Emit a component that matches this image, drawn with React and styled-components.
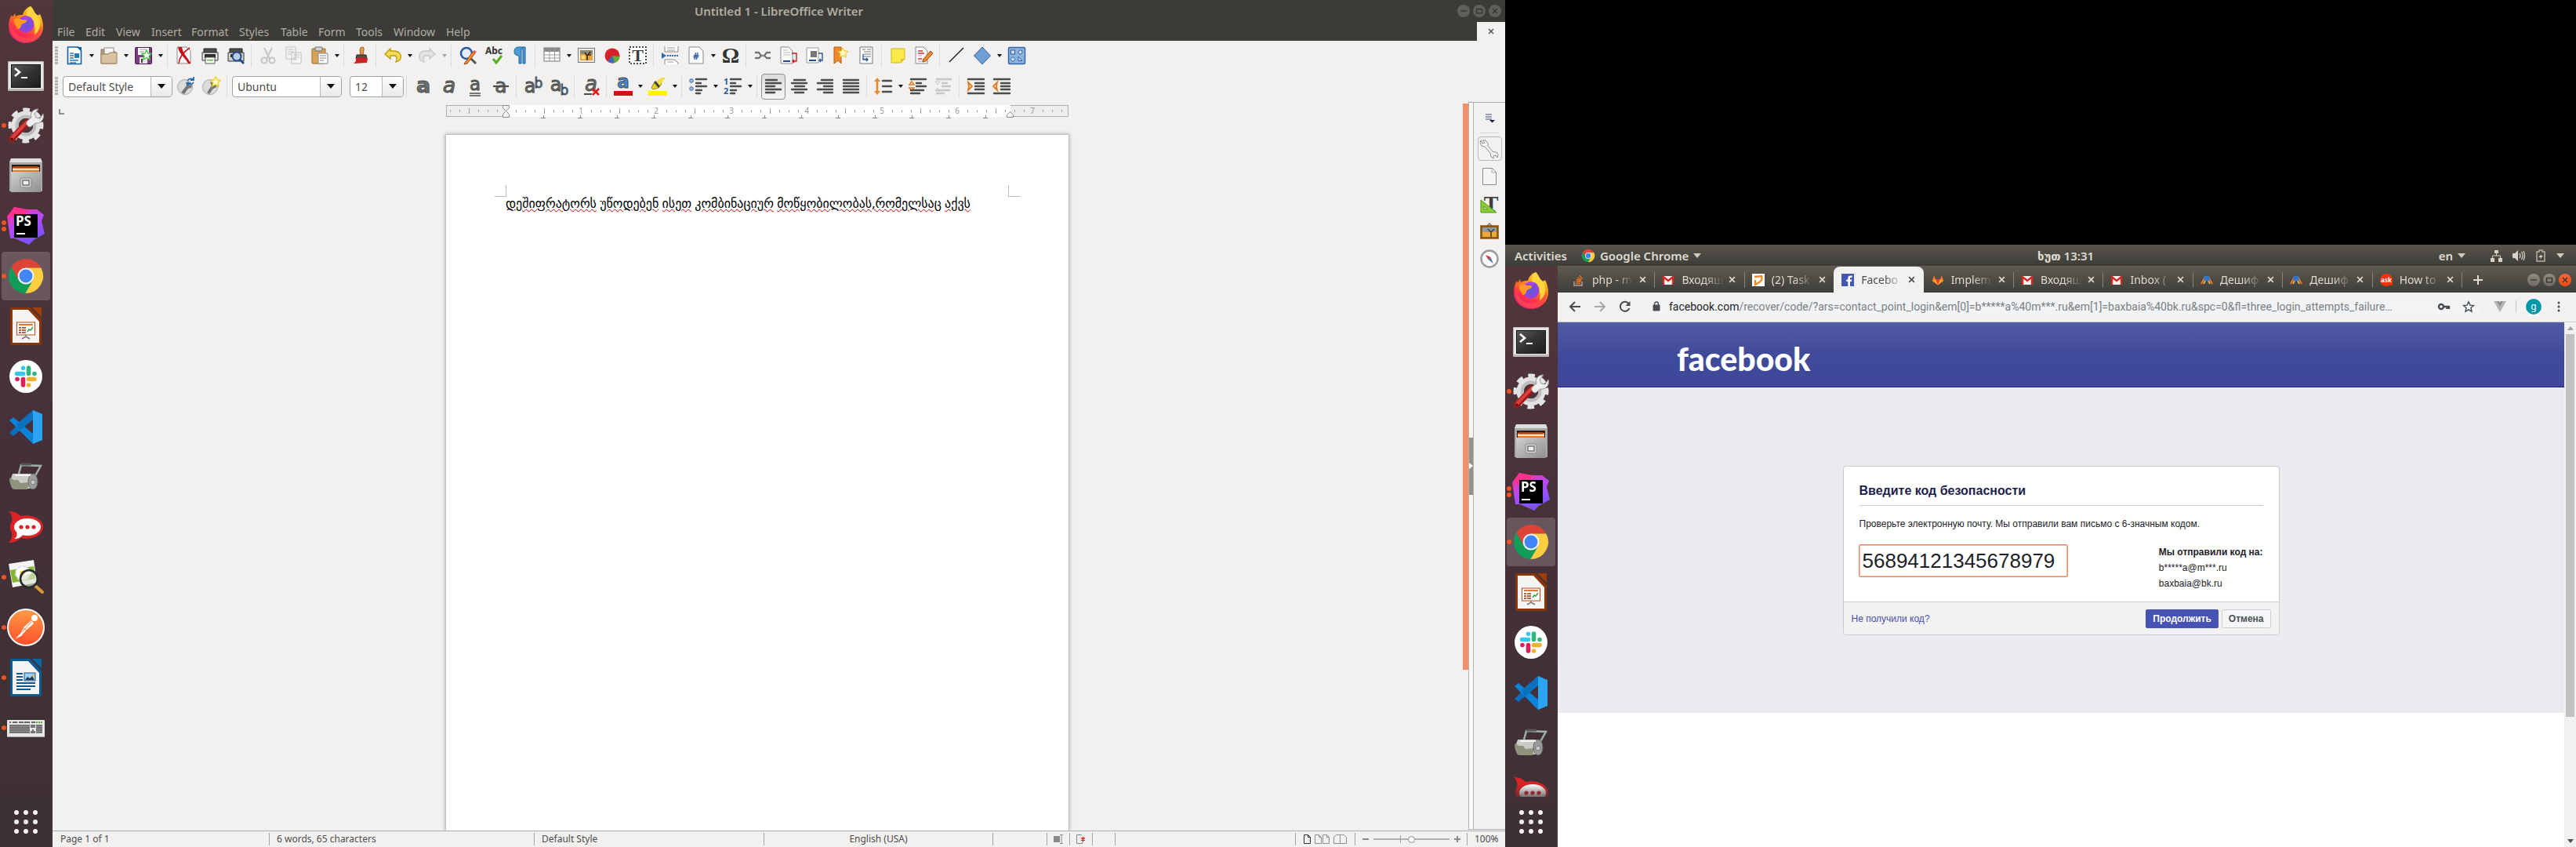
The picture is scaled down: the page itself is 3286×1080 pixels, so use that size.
import React from "react";
import styled, { createGlobalStyle, css } from "styled-components";

const UI = `"Noto Sans", "DejaVu Sans", sans-serif`;
const ARIAL = `"Liberation Sans", Arial, sans-serif`;

const Global = createGlobalStyle`
  * { box-sizing: border-box; }
  body { margin: 0; background: #000; font-family: ${UI}; font-size: 14px; }
  button, input, select { font: inherit; margin: 0; }
  button { border: 0; background: none; padding: 0; color: inherit; }
  p, h1, h2 { margin: 0; }
  svg { display: block; flex: none; overflow: visible; }
`;

const Desktop = styled.div`
  display: grid;
  grid-template-columns: 1920fr 1366fr;
  height: 100vh;
  overflow: hidden;
`;

/* ---------- Dock ---------- */

const DockBar = styled.nav`
  flex: none;
  width: 67px;
  display: flex;
  flex-direction: column;
  background: linear-gradient(#51363a, #45303a 55%, #3d3134);
`;
const DockList = styled.div`
  flex: 1;
  min-height: 0;
  overflow: hidden;
  ${(p) => p.$fade && css`mask-image: linear-gradient(#000 calc(100% - 16px), rgba(0, 0, 0, 0.3));`}
`;
const DockItem = styled.button`
  width: 65px;
  height: 64px;
  display: grid;
  grid-template-columns: 9px 48px;
  align-items: center;
`;
const DockSlot = styled.div`
  display: flex;
  padding-left: ${(p) => (p.$active ? "2px" : "0")};
  > button {
    width: ${(p) => (p.$active ? "62px" : "65px")};
    margin: 1px 0;
    height: 62px;
    grid-template-columns: ${(p) => (p.$active ? "7px 48px" : "9px 48px")};
    border-radius: 4px;
    background: ${(p) => (p.$active ? "rgba(255,255,255,0.18)" : "none")};
  }
`;
const Dots = styled.span`
  display: flex;
  flex-direction: column;
  gap: 2px;
  padding-left: ${(p) => (p.$active ? "0" : "2px")};
`;
const Dot = styled.i`
  width: 6px;
  height: 6px;
  border-radius: 50%;
  background: #e95420;
`;

const Firefox = () => (
  <svg width="48" height="48" viewBox="0 0 48 48">
    <defs>
      <linearGradient id="ffa" x1="0.8" y1="0" x2="0.3" y2="1">
        <stop offset="0" stopColor="#fff44f" />
        <stop offset="0.35" stopColor="#ff980e" />
        <stop offset="0.7" stopColor="#ff3647" />
        <stop offset="1" stopColor="#e31587" />
      </linearGradient>
      <radialGradient id="ffb">
        <stop offset="0" stopColor="#5b5bd6" />
        <stop offset="1" stopColor="#9a3fe0" />
      </radialGradient>
    </defs>
    <path d="M30 0c5 5 4 8 8 11 1 1 3 0 4-1 3 6 4 12 4 16 0 12-10 21-22 21S2 38 2 26c0-7 2-12 4-15l1 3 3-5 1 4c3-2 6-2 9-2 1-5 5-9 10-11z" fill="url(#ffa)" />
    <path d="M30 0c5 5 4 8 8 11 7 7 5 20-3 25 1-6 1-10-2-15-2-4-7-5-8-10 0-5 2-8 5-11z" fill="#ffd43c" />
    <path d="M5 23c2 16 20 21 31 13 4-3 6-7 7-12 3 13-6 22-19 22C11 46 3 36 5 23z" fill="#ff4a4a" opacity=".75" />
    <circle cx="24" cy="23" r="10.5" fill="url(#ffb)" />
    <path d="M18 14c4-3 12-2 14 2-3-1-6 0-6 2z" fill="#a347e8" />
    <path d="M9 17c4-3 8-1 10 0 4 0 6 0 6 2s-6 3-7 5c0 3-2 5-5 5-1-5-5-6-4-12z" fill="#ff9a1f" />
  </svg>
);
const Terminal = () => (
  <svg width="48" height="48" viewBox="0 0 48 48">
    <defs>
      <linearGradient id="trm" x1="0" y1="0" x2="1" y2="1">
        <stop offset="0" stopColor="#5a5a58" />
        <stop offset="0.5" stopColor="#333" />
        <stop offset="1" stopColor="#1e1e1e" />
      </linearGradient>
    </defs>
    <rect x="1" y="6" width="46" height="38" rx="1" fill="#b9b9b7" />
    <rect x="2" y="7" width="44" height="34" fill="#e6e6e4" />
    <rect x="5" y="10" width="38" height="30" fill="#111" />
    <rect x="6" y="11" width="36" height="28" fill="url(#trm)" />
    <path d="M10 15l6 5-6 5" stroke="#fff" strokeWidth="2.6" fill="none" />
    <path d="M18 27h8" stroke="#fff" strokeWidth="2" />
  </svg>
);
const Gear = () => (
  <svg width="48" height="48" viewBox="0 0 48 48">
    <circle cx="24" cy="24" r="19" fill="none" stroke="#e4e4e4" strokeWidth="7" strokeDasharray="8 6.92" transform="rotate(-12 24 24)" />
    <circle cx="24" cy="24" r="14" fill="none" stroke="#e2e2e2" strokeWidth="9" />
    <circle cx="24" cy="24" r="11.5" fill="none" stroke="#bdbdbd" strokeWidth="4" />
    <path d="M6 41L26 20" stroke="#a31515" strokeWidth="8" strokeLinecap="round" />
    <path d="M6 40L25 20" stroke="#d94040" strokeWidth="4" strokeLinecap="round" />
    <circle cx="6" cy="41" r="1.6" fill="#3b1515" />
    <path d="M26 18l5-4c-2-6 2-11 9-11l-5 6 2 5 5 1 4-6c2 7-3 13-10 12l-5 4c-3 3-9-3-5-7z" fill="#eee" stroke="#999" />
  </svg>
);
const Files = () => (
  <svg width="48" height="48" viewBox="0 0 48 48">
    <defs>
      <linearGradient id="fil" x1="0" y1="0" x2="1" y2="1">
        <stop offset="0" stopColor="#cfcfcf" />
        <stop offset="1" stopColor="#8f8f8f" />
      </linearGradient>
    </defs>
    <path d="M5 2h38l2 6v36H3V8z" fill="#a8a8a6" />
    <path d="M5 2h38l2 5H3z" fill="#dededc" />
    <rect x="6" y="10" width="36" height="12" fill="#2a1a12" />
    <path d="M7 13h34v9H7z" fill="#e8772a" />
    <path d="M7 15h34v2H7z" fill="#f8e0c0" />
    <path d="M8 12h31v2H8z" fill="#a4451a" />
    <rect x="5" y="19" width="38" height="26" fill="url(#fil)" />
    <rect x="17" y="27" width="14" height="12" rx="2" fill="#d0d0ce" stroke="#8a8a8a" />
    <rect x="20" y="30" width="8" height="6" fill="#efefef" stroke="#444" />
  </svg>
);
const PhpStorm = () => (
  <svg width="48" height="48" viewBox="0 0 48 48">
    <defs>
      <linearGradient id="psg" x1="0.2" y1="0" x2="0.7" y2="1">
        <stop offset="0" stopColor="#ff2d90" />
        <stop offset="0.45" stopColor="#b74af7" />
        <stop offset="1" stopColor="#6b57ff" />
      </linearGradient>
    </defs>
    <path d="M9 0l17 3 12 0 9 7-3 8 4 16-14 8-6 6-18-8H4L0 12z" fill="url(#psg)" />
    <path d="M9 0l17 4-5 12L2 12z" fill="#ff318c" />
    <rect x="9" y="9" width="30" height="30" fill="#000" />
    <text x="11" y="24" fontFamily={UI} fontSize="17" fontWeight="700" fill="#fff">PS</text>
    <path d="M12 34h11" stroke="#fff" strokeWidth="2" />
  </svg>
);
const Chrome = ({ size = 48 }) => (
  <svg width={size} height={size} viewBox="0 0 48 48">
    <path d="M43.3 13.5A22 22 0 0 0 5.25 12.54L14.9 29.25 24 13.5z" fill="#db4437" />
    <path d="M5.25 12.54A22 22 0 0 0 23.4 46L33.1 29.25H14.9z" fill="#0f9d58" />
    <path d="M23.4 46A22 22 0 0 0 43.3 13.5H24l9.1 15.75z" fill="#ffcd40" />
    <circle cx="24" cy="24" r="10.5" fill="#f1f1f1" />
    <circle cx="24" cy="24" r="8.4" fill="#4285f4" />
  </svg>
);
const Impress = () => (
  <svg width="48" height="48" viewBox="0 0 48 48">
    <path d="M6 0h23l15 15v31a2 2 0 0 1-2 2H6a2 2 0 0 1-2-2V2a2 2 0 0 1 2-2z" fill="#8a3505" />
    <path d="M32 0h12v12z" fill="#a33e03" />
    <path d="M7 3h20l14 15v27H7z" fill="#f4f4f4" />
    <rect x="12.5" y="19" width="23" height="16" fill="#fff" stroke="#b54a18" />
    <path d="M15 22h18" stroke="#e07a3c" strokeWidth="2" />
    <path d="M15 26h3m-3 3h3m-3 3h3m1-6h5m-5 3h5m-5 3h5" stroke="#8a3505" strokeWidth="1.6" />
    <path d="M26 31l2-3 2 1 3-4" stroke="#2f9e3a" strokeWidth="1.4" fill="none" />
    <path d="M24 35v2m-5 3l5-3 5 3" stroke="#777" strokeWidth="1.5" fill="none" />
  </svg>
);
const Slack = () => (
  <svg width="48" height="48" viewBox="0 0 48 48">
    <circle cx="24" cy="24" r="21" fill="#fff" />
    <g strokeWidth="5.6" strokeLinecap="round">
      <path d="M20.5 20.500h-8M20.500 13.200v0" stroke="#36c5f0" />
      <path d="M27.5 20.500v-7.500M35 20.500h0" stroke="#2eb67d" />
      <path d="M27.5 27.500h7.500M27.500 35v0" stroke="#ecb22e" />
      <path d="M20.5 27.500v7.500M13 27.500h0" stroke="#e01e5a" />
    </g>
  </svg>
);
const VsCode = () => (
  <svg width="48" height="48" viewBox="0 0 48 48">
    <path d="M33 3l12 5v33l-12 5z" fill="#2ba4f2" />
    <path d="M33 3v12L8 36l-5-4z" fill="#0b6fc0" />
    <path d="M33 46V33L8 12l-5 4z" fill="#0a84d8" />
    <path d="M33 3v12L16 29l-4-8z" fill="#0c70bd" />
  </svg>
);
const Roller = () => (
  <svg width="48" height="48" viewBox="0 0 48 48">
    <path d="M15 20l3-11 25 1-9 16" fill="none" stroke="#9fb0a8" strokeWidth="2.5" />
    <path d="M18 8h13" stroke="#555" strokeWidth="3" />
    <path d="M7 20h26v19H7q-5-8 0-19z" fill="#c9cbc5" />
    <path d="M3 25l6 3h5l3 4 11-1-2 9H8q-5-5-5-15z" fill="#8d937c" />
    <ellipse cx="33" cy="30" rx="6" ry="10" fill="#9b9d9b" stroke="#666" />
    <circle cx="33" cy="31" r="3" fill="#c9c9c9" stroke="#777" />
    <path d="M10 22h20" stroke="#f2f2f2" strokeWidth="2" />
  </svg>
);
const Rocket = () => (
  <svg width="48" height="48" viewBox="0 0 48 48">
    <path d="M2 4c6 0 12 2 15 6 15-3 29 4 29 14S33 41 17 38c-3 4-9 6-15 6 4-5 5-9 4-13-3-5-3-9 0-14 1-5 0-9-4-13z" fill="#db2323" />
    <ellipse cx="26" cy="24" rx="17" ry="11" fill="#fff" />
    <path d="M9 39c4-2 4-5 3-9l8 4c-2 3-6 5-11 5z" fill="#fff" />
    <circle cx="18" cy="24" r="2.6" fill="#db2323" />
    <circle cx="26" cy="24" r="2.6" fill="#db2323" />
    <circle cx="34" cy="24" r="2.6" fill="#db2323" />
  </svg>
);
const Photo = () => (
  <svg width="48" height="48" viewBox="0 0 48 48">
    <path d="M2 7l32-5 4 29-31 6z" fill="#f4f4f2" />
    <path d="M4 15l30-5 2 16-29 5z" fill="#86b530" />
    <circle cx="20" cy="19" r="9" fill="#fff" strokeDasharray="4 2" stroke="#dde" strokeWidth="2" />
    <circle cx="20" cy="19" r="3.5" fill="#f0c020" />
    <path d="M36 35l9 8" stroke="#d99a3a" strokeWidth="4" strokeLinecap="round" />
    <circle cx="28" cy="26" r="11" fill="rgba(215,225,205,.65)" stroke="#262a2a" strokeWidth="2.6" />
    <path d="M22 22c1-3 5-5 9-3" stroke="#fff" strokeWidth="2" fill="none" />
  </svg>
);
const Postman = () => (
  <svg width="48" height="48" viewBox="0 0 48 48">
    <defs>
      <linearGradient id="pst" x1="0" y1="0" x2="0" y2="1">
        <stop offset="0" stopColor="#ff9a45" />
        <stop offset="1" stopColor="#ff4f2b" />
      </linearGradient>
    </defs>
    <circle cx="24" cy="24" r="23" fill="url(#pst)" stroke="#fff" strokeWidth="2" />
    <circle cx="35" cy="12" r="4" fill="#fff" />
    <path d="M31 15l3 4-10 9-6 7-8 4 7-7 4-8z" fill="#fff" />
    <path d="M20 25l6 3m-10 2l-5 8M31 17l-12 13" stroke="#ff7a3a" strokeWidth="1" fill="none" />
  </svg>
);
const WriterApp = () => (
  <svg width="48" height="48" viewBox="0 0 48 48">
    <path d="M6 0h23l15 15v31a2 2 0 0 1-2 2H6a2 2 0 0 1-2-2V2a2 2 0 0 1 2-2z" fill="#0b5a94" />
    <path d="M32 0h12v12z" fill="#0a67a8" />
    <path d="M7 3h20l14 15v27H7z" fill="#f4f4f4" />
    <path d="M12 19h8m-8 4h8m-8 4h8m-8 4h24m-24 4h24m-24 4h18" stroke="#0b5a94" strokeWidth="2" />
    <rect x="22" y="18" width="14" height="10" fill="#9fd0f5" stroke="#0b5a94" />
    <path d="M23 27l3-4 3 2 3-3 3 5z" fill="#1c3a4e" />
    <circle cx="33.5" cy="21" r="1.5" fill="#f5b83a" />
  </svg>
);
const Keyboard = () => (
  <svg width="48" height="48" viewBox="0 0 48 48">
    <rect x="0" y="14" width="48" height="22" rx="1" fill="#e8e8e6" />
    <path d="M0 35h48v1H0z" fill="#a5a5a3" />
    <path d="M3 17h2m2 0h6m2 0h6m1 0h7m2 0h5" stroke="#666" strokeWidth="2" />
    <path d="M37 17h8" stroke="#5aa53a" strokeWidth="2" strokeDasharray="2 1" />
    <path d="M3 20h26v11H3zM37 20h8v11h-8zM30 20h6v4h-6zM32 26h2v2h2v3h-6v-3h2z" fill="#747474" />
    <path d="M3 22.500h26M3 25.500h26M3 28.500h26M37 22.500h8M37 25.500h8M37 28.500h8" stroke="#9b9b9b" strokeWidth=".6" />
  </svg>
);
const AppsGrid = () => (
  <svg width="48" height="48" viewBox="0 0 48 48">
    {[12, 24, 36].map((x) => [12, 24, 36].map((y) => <circle key={x + "-" + y} cx={x} cy={y} r="3" fill="#f2f2f2" />))}
  </svg>
);

const APPS = [
  ["Firefox", Firefox, 0], ["Terminal", Terminal, 0], ["Tweaks", Gear, 1], ["Files", Files, 0],
  ["PhpStorm", PhpStorm, 2], ["Google Chrome", Chrome, 1, true], ["LibreOffice Impress", Impress, 0],
  ["Slack", Slack, 0], ["Visual Studio Code", VsCode, 0], ["Roller", Roller, 0], ["Rocket.Chat", Rocket, 0],
  ["Image Viewer", Photo, 1], ["Postman", Postman, 1], ["LibreOffice Writer", WriterApp, 1], ["Keyboard", Keyboard, 1],
];

const Dock = ({ fade }) => (
  <DockBar aria-label="Dock">
    <DockList $fade={fade}>
      {APPS.map(([name, Icon, n, active]) => (
        <DockSlot key={name} $active={active}>
          <DockItem aria-label={name}>
            <Dots $active={active}>{Array.from({ length: n }, (_, i) => <Dot key={i} />)}</Dots>
            <Icon />
          </DockItem>
        </DockSlot>
      ))}
    </DockList>
    <DockItem aria-label="Show applications"><Dots /><AppsGrid /></DockItem>
  </DockBar>
);

/* ---------- Writer window ---------- */

const Screen = styled.section`
  display: flex;
  min-width: 0;
  min-height: 0;
  flex: 1;
`;
const WriterWindow = styled.div`
  flex: 1;
  min-width: 0;
  display: flex;
  flex-direction: column;
  background: #f2f1f0;
  color: #4c4c4c;
`;
const TitleBar = styled.header`
  height: 28px;
  display: grid;
  grid-template-columns: 1fr auto 1fr;
  align-items: center;
  background: #3c3b37;
  color: #b0aea4;
  h1 { font-size: 15px; font-weight: 600; line-height: 20px; }
`;
const WinControls = styled.div`
  grid-column: 3;
  justify-self: end;
  display: flex;
  gap: 4px;
  padding-right: 5px;
`;
const WinButton = styled.button`
  width: 16px;
  height: 16px;
  border-radius: 50%;
  background: ${(p) => (p.$hot ? "linear-gradient(#f4683a, #ee4b16)" : p.$lit ? "linear-gradient(#8f8d84, #6d6b63)" : "#615f59")};
  color: #35342f;
`;
const MenuRow = styled.div`
  display: flex;
  height: 24px;
  background: #3c3b37;
`;
const Menu = styled.div`
  flex: 1;
  display: flex;
  align-items: center;
  padding: 2px 0 0 6px;
`;
const MenuButton = styled.button`
  width: ${(p) => p.$w}px;
  color: #b0aea4;
  text-align: left;
  line-height: 20px;
`;
const CloseDoc = styled.button`
  width: 36px;
  background: #f2f1f0;
  display: grid;
  place-items: center;
`;
const Toolbar = styled.div`
  height: ${(p) => p.$h}px;
  padding-left: 3px;
  display: flex;
  align-items: center;
`;
const Grip = styled.i`
  width: 4px;
  height: 24px;
  background: repeating-linear-gradient(#b4b4b2 0 3px, transparent 3px 4px);
  margin-right: ${(p) => p.$gap}px;
`;
const Tool = styled.button`
  width: 33px;
  height: 33px;
  display: grid;
  place-items: center;
  opacity: ${(p) => (p.$off ? 0.35 : 1)};
  ${(p) => p.$on && css`
    width: 31px;
    margin: 0 1px;
    border: 1px solid #8f8f8d;
    border-radius: 4px;
    background: linear-gradient(#dcdcda, #f4f4f3);
  `}
`;
const Drop = styled.button`
  width: 11px;
  height: 33px;
  display: grid;
  place-items: center;
  opacity: ${(p) => (p.$off ? 0.35 : 1)};
  &::after { content: ""; border: 3px solid transparent; border-top: 4px solid #111; border-bottom: 0; }
`;
const Sep = styled.i`
  width: 1px;
  height: 29px;
  margin: 0 4px 0 3px;
  background: #dcdbd9;
`;
const Combo = styled.label`
  width: ${(p) => p.$w}px;
  height: 27px;
  margin: 0 ${(p) => p.$after || 0}px 0 ${(p) => p.$before || 0}px;
  display: flex;
  border: 1px solid #a3a19d;
  border-radius: 4px;
  background: #fff;
  overflow: hidden;
  select {
    flex: 1;
    min-width: 0;
    appearance: none;
    border: 0;
    padding: 0 0 0 6px;
    background: none;
    color: #4c4c4c;
    outline: 0;
  }
`;
const ComboArrow = styled.span`
  width: 27px;
  border-left: 1px solid #b9b7b3;
  background: linear-gradient(#fdfdfd, #e9e9e7);
  display: grid;
  place-items: center;
  &::after { content: ""; border: 5px solid transparent; border-top: 6px solid #111; border-bottom: 0; }
`;

const Svg = ({ children, s = 24 }) => <svg width={s} height={s} viewBox="0 0 24 24" fill="none">{children}</svg>;
const Sheet = ({ x = 4, y = 1, w = 16, h = 21, stroke = "#8a8a88" }) => (
  <path d={`M${x} ${y}h${w - 5}l5 5v${h - 5}h-${w}z`} fill="#fbfbfb" stroke={stroke} />
);
const Lines = ({ rows, color = "#4a4d4a", sw = 2.4 }) => (
  <path d={rows.map(([x, y, w]) => `M${x} ${y}h${w}`).join("")} stroke={color} strokeWidth={sw} strokeLinecap="round" />
);
const Letter = ({ children, italic, x = 12, y = 19, size = 24, fill = "#6a706c", anchor = "middle", weight = 700 }) => (
  <text x={x} y={y} fontFamily={`"DejaVu Sans", sans-serif`} fontSize={size} fontWeight={weight} fontStyle={italic ? "italic" : "normal"} textAnchor={anchor} fill={fill} stroke="#3d423f" strokeWidth=".8">{children}</text>
);

const I = {
  newDoc: <Svg><path d="M3.5 1h13l4 4v17.500h-17z" fill="#fff" stroke="#0f609b" strokeWidth="1.6" /><path d="M15 1h6v6z" fill="#0f609b" /><path d="M6 9h5m-5 3h5m-5 3h5m-5 3h11m-11 3h8" stroke="#2a7ab8" strokeWidth="1.4" /><rect x="12" y="9" width="6" height="6" fill="#2a7ab8" /></Svg>,
  open: <Svg><path d="M2 4h8l2 3h8v15H2z" fill="#b59a78" stroke="#8c7250" /><path d="M6 2h12v8H6z" fill="#f7f7f5" stroke="#888" /><path d="M2 10l9 0 2-2h9v14H2z" fill="#d9c2a0" stroke="#99805c" /></Svg>,
  save: <Svg><rect x="1.5" y="1.5" width="21" height="21" rx="1" fill="#7a3d80" stroke="#4b1c50" /><rect x="5" y="2" width="14" height="9" fill="#fff" /><path d="M7 4h9m-9 3h6" stroke="#999" /><rect x="7" y="14" width="10" height="8" fill="#e4e4e4" /><path d="M9 16h2v5H9z" fill="#444" /><path d="M16 5l2 4 4 .4-3 3 1 4.400-4-2.300-4 2.300 1-4.400-3-3 4-.4z" fill="#fff" stroke="#43c443" strokeWidth="1.4" /></Svg>,
  pdf: <Svg><Sheet x={3} w={17} /><path d="M4 1h5c1 7 6 12 11 20v1h-3C14 15 5 10 4 1z" fill="#c5141c" /><path d="M19 2C13 6 6 12 5 22" stroke="#c5141c" strokeWidth="1.6" /></Svg>,
  print: <Svg><path d="M4 3h16v7H4z" fill="#4d4f4d" stroke="#222" /><path d="M2 8h20v10H2z" fill="#e5e5e3" stroke="#333" /><path d="M5 10h14v5H5z" fill="#2d2d2d" /><path d="M6 14h12v8H6z" fill="#fff" stroke="#555" /><path d="M8 18c3-2 5 2 8-1" stroke="#5cb53a" strokeWidth="1.6" /></Svg>,
  preview: <Svg><path d="M4 3h16v7H4z" fill="#4d4f4d" stroke="#222" /><path d="M2 8h20v11H2z" fill="#d0d0ce" stroke="#333" /><path d="M5 10h14v4H5z" fill="#2d2d2d" /><circle cx="13" cy="13" r="5.5" fill="#b8cdea" stroke="#204a87" strokeWidth="2" /><path d="M17 17l5 5" stroke="#204a87" strokeWidth="2.6" /></Svg>,
  cut: <Svg><path d="M7 2l7 14M17 2l-7 14" stroke="#777" strokeWidth="2" /><circle cx="7" cy="18" r="3.5" stroke="#777" strokeWidth="2" /><circle cx="17" cy="18" r="3.5" stroke="#777" strokeWidth="2" /></Svg>,
  copy: <Svg><path d="M2 1h12v15H2zM9 8h12v14H9z" fill="#fff" stroke="#666" /><path d="M4 4h8M4 7h8M4 10h4m3 1h8m-8 3h8m-8 3h5" stroke="#666" /></Svg>,
  paste: <Svg><rect x="2" y="3" width="17" height="19" rx="1" fill="#d9a254" stroke="#9a6a26" /><rect x="6" y="1" width="9" height="5" rx="1" fill="#d5d5d3" stroke="#666" /><path d="M10 9h12v13H10z" fill="#fff" stroke="#888" /><path d="M12 12h8m-8 3h8m-8 3h5" stroke="#888" /></Svg>,
  brush: <Svg><path d="M14 1q3 0 2 4l-1 6h-3l-1-6q0-4 3-4z" fill="#e39a4a" stroke="#a35f1c" /><path d="M7 11h12l1 5H6z" fill="#5a4a42" stroke="#2d2420" /><path d="M6 15h15l-1 6-17 1 3-3z" fill="#d21f26" /></Svg>,
  undo: <Svg><path d="M9 3L2 10l7 6v-4h5q5 0 2 8 8-2 6-9-2-5-9-5H9z" fill="#f4dc52" stroke="#b99a10" strokeWidth="1.3" /></Svg>,
  redo: <Svg><path d="M15 3l7 7-7 6v-4h-5q-5 0-2 8-8-2-6-9 2-5 9-5h4z" fill="#ccc" stroke="#777" strokeWidth="1.3" /></Svg>,
  find: <Svg><circle cx="10" cy="9" r="7" fill="#e6eef8" stroke="#2a5ca5" strokeWidth="2.6" /><path d="M15 15l7 7" stroke="#555" strokeWidth="3" /><path d="M8 21l10-14 3 2-10 13-4 1z" fill="#ee8a3a" stroke="#9a4a12" /><path d="M18 7l2-2 3 2-2 2z" fill="#e05a5a" /></Svg>,
  abc: <Svg><text x="12" y="10" fontFamily={UI} fontSize="12" fontWeight="700" textAnchor="middle" fill="#333">Abc</text><path d="M11 16l4 5 7-9" stroke="#57b022" strokeWidth="3" /></Svg>,
  pilcrow: <Svg><path d="M11 1h8v21h-3V3h-2v19h-3V12q-6 0-6-5.500T11 1z" fill="#4e9bd4" stroke="#1a639c" /></Svg>,
  table: <Svg><rect x="2" y="2" width="20" height="17" fill="#fff" stroke="#777" /><path d="M2 2h20v5H2z" fill="#8a8a88" /><path d="M2 11h20M2 15h20M9 2v17M15.500 2v17" stroke="#999" /></Svg>,
  image: <Svg><rect x="1.5" y="2.5" width="21" height="18" fill="#e9e9e7" stroke="#777" /><rect x="4" y="5" width="16" height="13" fill="#e8a33a" /><path d="M4 5h16v5H4z" fill="#8f8a72" /><path d="M13 18v-6l-3-4m3 4l4-5m-3 4l4 0" stroke="#33261a" strokeWidth="1.5" /><circle cx="8" cy="14" r="2.5" fill="#ffe36e" /></Svg>,
  chart: <Svg><circle cx="12" cy="12" r="9.5" fill="#d8202a" /><path d="M12 12l9.500 1A9.500 9.500 0 0 1 14 21.300z" fill="#6aa832" /><path d="M12 12l3 9A9.500 9.500 0 0 1 6 19z" fill="#3a6cb5" /></Svg>,
  text: <Svg><rect x="1" y="1" width="21" height="21" stroke="#111" strokeWidth="1.5" strokeDasharray="2 2" fill="#fff" /><text x="11.5" y="19" fontFamily={`"Liberation Serif", serif`} fontSize="22" fontWeight="700" textAnchor="middle" fill="#3a3d3b">T</text></Svg>,
  pageBreak: <Svg><path d="M5 0v7h17V0M5 23v-6h12l5 4v2" fill="#fff" stroke="#888" /><path d="M8 2h10M8 5h10M8 20h8" stroke="#999" /><path d="M1 8l6 4-6 4z" fill="#2a6cb0" /><path d="M8 12h15" stroke="#2a6cb0" strokeWidth="2" strokeDasharray="2 1" /></Svg>,
  field: <Svg><Sheet x={3} w={18} /><text x="12" y="17" fontFamily={UI} fontSize="12" fontWeight="700" textAnchor="middle" fill="#2a5a9c">#</text></Svg>,
  omega: <Svg><text x="12" y="21" fontFamily={`"Liberation Serif", serif`} fontSize="28" fontWeight="700" textAnchor="middle" fill="#2f3331">Ω</text></Svg>,
  link: <Svg><path d="M2 8h5l3 4-3 3H2m20-7h-5l-3 4 3 3h5M8 12h8" stroke="#8a8d8a" strokeWidth="2.3" /><path d="M2 8h5l3 4-3 3H2m20-7h-5l-3 4 3 3h5" stroke="#4b4e4b" strokeWidth=".8" /></Svg>,
  footnote: <Svg><Sheet x={2} w={15} /><path d="M5 5h6m-6 3h9m-9 3h9" stroke="#bbb" /><path d="M5 19h9" stroke="#204a87" strokeWidth="2" /><path d="M16 9h6v10h-5m2-2l-2 2 2 2" stroke="#cc1a1a" strokeWidth="1.4" /></Svg>,
  endnote: <Svg><path d="M2 2h15v19H2z" fill="#fff" stroke="#999" /><path d="M7 6h8v8H7z" fill="#777" /><path d="M5 18h9" stroke="#204a87" strokeWidth="2" /><path d="M17 9h5v9h-4m2-2l-2 2 2 2" stroke="#2a5a9c" strokeWidth="1.4" /></Svg>,
  bookmark: <Svg><path d="M4 1h9v21l-4-4-5 4z" fill="#f0892c" stroke="#b85a10" /><path d="M15 2l2 4 5 .4-3.600 3 1 4.600-4.400-2.500-4 2.500 1-4.600L9 6.400l4-.4z" fill="#fff7b8" stroke="#e6c619" /></Svg>,
  crossRef: <Svg><path d="M4 1h16v21H4z" fill="#fff" stroke="#777" /><path d="M7 4h4m2 0h5M9 7h9M9 10h9m-9 3h9m-9 3h5" stroke="#777" /><path d="M8 10v7h6m-2-2l2 2-2 2" stroke="#2a5a9c" strokeWidth="1.4" /></Svg>,
  note: <Svg><path d="M3 3h17v13l-5 5H3z" fill="#fbea49" stroke="#cdb70f" /><path d="M20 16h-5v5z" fill="#d8c22a" /></Svg>,
  track: <Svg><Sheet x={1} w={15} /><path d="M4 6h6M4 9h8M4 16h5" stroke="#c33" strokeWidth="1.4" /><path d="M4 12h5m-5 7h8" stroke="#aaa" /><path d="M10 20l1-4 9-10 3 3-9 10z" fill="#ee8a3a" stroke="#9a4a12" /></Svg>,
  line: <Svg><path d="M3 20L21 2" stroke="#111" strokeWidth="1.3" /></Svg>,
  diamond: <Svg><path d="M12 1l10.500 11L12 23 1.500 12z" fill="#6f9fd4" stroke="#3465a4" /></Svg>,
  shapes: <Svg><rect x="1.5" y="1.5" width="21" height="21" rx="1.5" fill="#8bb3de" stroke="#3465a4" strokeWidth="1.5" /><rect x="4.5" y="5" width="5" height="5" fill="#d4e3f4" stroke="#2a5a9c" /><circle cx="16.5" cy="7.5" r="2.5" fill="#d4e3f4" stroke="#2a5a9c" /><path d="M7 13.500l3 3-3 3-3-3zM14 13.500v5h5z" fill="#d4e3f4" stroke="#2a5a9c" /></Svg>,
  upd: <Svg><circle cx="11" cy="13" r="9.5" fill="#dcdcda" stroke="#a8a8a6" /><path d="M6 20l7-9-1-4 4-1-1 3 2 2 3-1-1 4-4 1-5 7z" fill="#777" /><path d="M14 5q3-4 7-2m1 4q-3 4-7 2M22 0v4h-4M14 11V8h4" stroke="#2a6cb0" strokeWidth="1.8" /></Svg>,
  newStyle: <Svg><circle cx="10" cy="13" r="9.5" fill="#dcdcda" stroke="#a8a8a6" /><path d="M6 20l6-9-2-4 3-1 0 3 3 2 3-1-2 4-3 1-5 7z" fill="#777" /><path d="M17 0l2 4 4 .4-3 3 1 4.400-4-2.300-4 2.300 1-4.400-3-3 4-.4z" fill="#fffbd8" stroke="#efd41c" strokeWidth="1.4" /></Svg>,
  bold: <Svg><Letter size={27} y={20}>a</Letter></Svg>,
  italic: <Svg><Letter italic size={27} y={20} weight={400}>a</Letter></Svg>,
  under: <Svg><Letter size={23} y={17} weight={400}>a</Letter><path d="M5 21h14M5 24h14" stroke="#4a4d4a" strokeWidth="1.4" /></Svg>,
  strike: <Svg><Letter size={25} y={20} weight={400}>a</Letter><path d="M2 12h20" stroke="#4a4d4a" strokeWidth="2.2" /></Svg>,
  sup: <Svg><Letter size={24} y={20} x={8} weight={400}>a</Letter><Letter size={17} y={14} x={19} fill="#4a86cf" weight={400}>b</Letter></Svg>,
  sub: <Svg><Letter size={24} y={18} x={8} weight={400}>a</Letter><Letter size={17} y={23} x={19} fill="#4a86cf" weight={400}>b</Letter></Svg>,
  clear: <Svg><Letter italic size={26} y={18} weight={400}>a</Letter><path d="M3 22h10" stroke="#4a4d4a" strokeWidth="2" /><path d="M14 15l8 8m0-8l-8 8" stroke="#e01818" strokeWidth="2.6" /></Svg>,
  color: <Svg><Letter size={23} y={14} fill="#4a86cf">a</Letter><rect x="0" y="18" width="24" height="6" fill="#cf1118" /></Svg>,
  mark: <Svg><path d="M4 14l3-6 6-3 4 4-4 5-7 2z" fill="#e8d020" stroke="#9a8a10" /><path d="M10 6l7-5h5l-6 8-3 2z" fill="#f0e040" /><path d="M8 6l6 7" stroke="#444" strokeWidth="3" /><rect x="0" y="18" width="24" height="6" fill="#fff200" /></Svg>,
  bullets: <Svg><circle cx="3" cy="5" r="2.3" fill="#9fc2e8" stroke="#3465a4" /><circle cx="3" cy="15" r="2.3" fill="#9fc2e8" stroke="#3465a4" /><Lines rows={[[9, 3, 13], [9, 8, 6], [9, 12, 13], [9, 17, 7], [9, 21, 5]]} /></Svg>,
  numbers: <Svg><text x="0" y="10" fontFamily={UI} fontSize="11" fontWeight="700" fill="#2a5a9c">1</text><text x="0" y="22" fontFamily={UI} fontSize="11" fontWeight="700" fill="#2a5a9c">2</text><Lines rows={[[9, 3, 13], [9, 8, 6], [9, 12, 13], [9, 17, 7], [9, 21, 5]]} /></Svg>,
  left: <Svg><Lines rows={[[2, 4, 14], [2, 8, 19], [2, 12, 11], [2, 16, 19], [2, 20, 11]]} /></Svg>,
  center: <Svg><Lines rows={[[5, 4, 14], [2, 8, 19], [6, 12, 12], [2, 16, 19], [6, 20, 11]]} /></Svg>,
  right: <Svg><Lines rows={[[7, 4, 14], [2, 8, 19], [10, 12, 11], [2, 16, 19], [10, 20, 11]]} /></Svg>,
  justify: <Svg><Lines rows={[[2, 4, 19], [2, 8, 19], [2, 12, 19], [2, 16, 19], [2, 20, 19]]} /></Svg>,
  spacing: <Svg><path d="M4 4v16" stroke="#e8892c" strokeWidth="2.6" /><path d="M0 6l4-5 4 5zM0 18l4 5 4-5z" fill="#e8892c" /><Lines rows={[[11, 5, 11], [11, 12, 11], [11, 19, 11]]} /></Svg>,
  inc: <Svg><path d="M1 10l3-4 3 4zM1 14l3 4 3-4z" fill="#fff" stroke="#e07a1c" strokeWidth="1.4" /><Lines rows={[[3, 3, 19], [10, 8, 6], [10, 12, 12], [3, 17, 16], [3, 21, 11]]} /></Svg>,
  dec: <Svg><path d="M1 6l3 4 3-4zM1 18l3-4 3 4z" fill="#fff" stroke="#777" /><Lines color="#777" rows={[[3, 3, 18], [10, 8, 6], [10, 12, 10], [3, 17, 16], [3, 21, 9]]} /></Svg>,
  indent: <Svg><path d="M2 7l5 5-5 5 1-5z" fill="#fff" stroke="#e07a1c" strokeWidth="1.8" /><Lines rows={[[2, 3, 20], [11, 8, 11], [11, 12, 11], [11, 16, 11], [2, 21, 20]]} /></Svg>,
  outdent: <Svg><path d="M6 7l-5 5 5 5-1-5z" fill="#fff" stroke="#e07a1c" strokeWidth="1.8" /><Lines rows={[[2, 3, 20], [11, 8, 11], [11, 12, 11], [11, 16, 11], [2, 21, 20]]} /></Svg>,
};

/* Entries: icon name, "v" for a drop-down arrow, "|" for a separator. A "-" prefix marks a disabled control, "+" a pressed one. */
const STANDARD = "newDoc v open v save v | pdf print preview | -cut -copy paste v | brush | undo v -redo -v | find abc pilcrow | table v image chart text | pageBreak field v omega | link footnote endnote bookmark crossRef | note track | line diamond v shapes".split(" ");
const FORMAT_TEXT = "| bold italic under strike | sup sub | clear | color v mark v | bullets v numbers v | +left center right justify | spacing v inc -dec | indent outdent".split(" ");

const Tools = ({ items }) => items.map((raw, i) => {
  if (raw === "|") return <Sep key={i} />;
  const off = raw[0] === "-";
  const on = raw[0] === "+";
  const name = off || on ? raw.slice(1) : raw;
  if (name === "v") return <Drop key={i} $off={off} disabled={off} aria-label="More options" />;
  return <Tool key={i} $off={off} $on={on} disabled={off} aria-label={name}>{I[name]}</Tool>;
});

const Select = ({ w, before, after, label, value }) => (
  <Combo $w={w} $before={before} $after={after}>
    <select aria-label={label} defaultValue={value}><option>{value}</option></select>
    <ComboArrow />
  </Combo>
);

const Workspace = styled.main`
  flex: 1;
  min-height: 0;
  display: flex;
`;
const Canvas = styled.div`
  flex: 1;
  min-width: 0;
  overflow: hidden;
  display: flex;
  flex-direction: column;
  padding: 4px 1px 0 0;
`;
const RulerRow = styled.div`
  display: grid;
  grid-template-columns: 1fr 794px 1fr;
  height: 18px;
  margin-bottom: 19px;
`;
const TabMark = styled.i`
  width: 7px;
  height: 7px;
  margin: 5px 0 0 8px;
  border-left: 2px solid #8f8f8d;
  border-bottom: 2px solid #8f8f8d;
`;
const Paper = styled.article`
  align-self: center;
  flex: 1;
  width: 796px;
  border: 1px solid #c3c3c3;
  border-bottom: 0;
  background: #fff;
  box-shadow: 0 0 5px rgba(0, 0, 0, 0.3);
  padding: 64px 62px 0;
`;
const Corners = styled.div`
  display: flex;
  justify-content: space-between;
  &::before, &::after {
    content: "";
    width: 14px;
    height: 14px;
    border: 1px solid #bcbcbc;
    border-top: 0;
  }
  &::before { border-left: 0; }
  &::after { border-right: 0; }
`;
const Para = styled.p`
  margin: 0 14px;
  font-family: "Noto Sans", "DejaVu Sans", sans-serif;
  font-size: 16px;
  line-height: 17px;
  color: #000;
  white-space: nowrap;
  span { text-decoration: underline wavy #d00000 1px; text-underline-offset: 1px; }
`;
const ScrollStrip = styled.div`
  width: 7px;
  height: 722px;
  margin-top: 2px;
  background: #f38f68;
`;
const Splitter = styled.div`
  width: 7px;
  display: flex;
  align-items: center;
  border-left: 1px solid #b2b2b0;
  border-right: 1px solid #b2b2b0;
  background: #f8f8f7;
`;
const Handle = styled.button`
  width: 7px;
  height: 73px;
  background: #96928b;
  display: grid;
  place-items: center;
  &::after { content: ""; border: 4px solid transparent; border-left: 5px solid #fff; border-right: 0; }
`;
const SidePane = styled.div`
  display: flex;
  border-top: 1px solid #a8a8a6;
  border-bottom: 1px solid #b2b2b0;
  margin-bottom: 1px;
`;
const SideBar = styled.aside`
  width: 40px;
  display: flex;
  flex-direction: column;
  align-items: center;
  padding-top: 3px;
  gap: 4px;
  > hr { width: 24px; border: 0; border-top: 1px solid #d8d7d5; margin: 0; }
`;
const SideButton = styled.button`
  width: 31px;
  height: 31px;
  display: grid;
  place-items: center;
  border: 1px solid ${(p) => (p.$on ? "#b9b9b7" : "transparent")};
  border-radius: 4px;
`;

const StatusBar = styled.footer`
  height: 21px;
  border-top: 1px solid #acacaa;
  display: flex;
  align-items: center;
  padding: 0 9px 0 1px;
  font-size: 12px;
  line-height: 20px;
`;
const Cell = styled.div`
  width: ${(p) => p.$w}px;
  flex: ${(p) => (p.$grow ? "1 1 0" : "none")};
  height: 16px;
  padding-left: ${(p) => (p.$center ? 0 : 9)}px;
  border-right: ${(p) => (p.$last ? 0 : "1px solid #a2a2a0")};
  display: flex;
  align-items: center;
  justify-content: ${(p) => (p.$center ? "center" : "flex-start")};
  gap: ${(p) => p.$gap || 0}px;
`;
const ZoomRange = styled.input`
  appearance: none;
  width: 97px;
  height: 14px;
  margin: 0;
  background: linear-gradient(#b0b0ae, #b0b0ae) 0 50% / 100% 2px no-repeat, linear-gradient(#a0a09e, #a0a09e) 34px 50% / 1px 10px no-repeat;
  &::-webkit-slider-thumb {
    appearance: none;
    width: 9px;
    height: 9px;
    border-radius: 50%;
    border: 1px solid #8a8a88;
    background: #fff;
  }
`;

const Ruler = () => {
  const ticks = [];
  for (let i = -6; i <= 59; i++) {
    if (i % 8 === 0) continue;
    const x = 77 + i * 12;
    const half = i % 4 === 0;
    ticks.push(<path key={i} d={`M${x} ${half ? 4 : 6}v${half ? 7 : 3}`} stroke="#9c9c9a" />);
  }
  const tabs = [];
  for (let i = 1; i <= 13; i++) tabs.push(<path key={i} d={`M${77 + i * 47} 13v3m-3 0h6`} stroke="#8a8a88" />);
  return (
    <svg width="794" height="18" viewBox="0 0 794 18" fill="none" shapeRendering="crispEdges">
      <rect x="0.5" y="0.5" width="793" height="14" fill="#efeeed" stroke="#b0b0ae" />
      <rect x="77" y="0" width="643" height="15" fill="#fff" />
      {ticks}
      {tabs}
      {[1, 2, 3, 4, 5, 6, 7].map((n) => (
        <text key={n} x={76 + n * 96} y="11" textAnchor="middle" fontFamily={UI} fontSize="10" fill="#9a9a98">{n}</text>
      ))}
      <g shapeRendering="auto" fill="#f7f7f6" stroke="#8a8a88">
        <path d="M72.5 .5h8v3l-4 4-4-4zM72.500 15.500v-4l4-4 4 4v4z" />
        <path d="M715.5 15.500v-3l4-4 4 4v3z" />
      </g>
    </svg>
  );
};

const MENU = [["File", 36], ["Edit", 39], ["View", 45], ["Insert", 51], ["Format", 61], ["Styles", 53], ["Table", 48], ["Form", 48], ["Tools", 48], ["Window", 67], ["Help", 40]];

const Cross = ({ s = 8 }) => <svg width={s} height={s} viewBox="0 0 8 8"><path d="M1 1l6 6m0-6L1 7" stroke="currentColor" strokeWidth="1.4" /></svg>;
const Glyph = ({ kind }) => (
  <svg width="16" height="16" viewBox="0 0 16 16" fill="none" stroke="#35342f" strokeWidth="1.3">
    {kind === "min" && <path d="M4 8h8" />}
    {kind === "max" && <rect x="4.5" y="5.5" width="7" height="5.5" />}
    {kind === "close" && <path d="M5 5l6 6m0-6l-6 6" />}
  </svg>
);
const Controls = ({ lit }) => (
  <>
    <WinButton $lit={lit} aria-label="Minimize"><Glyph kind="min" /></WinButton>
    <WinButton $lit={lit} aria-label="Maximize"><Glyph kind="max" /></WinButton>
    <WinButton $hot={lit} aria-label="Close"><Glyph kind="close" /></WinButton>
  </>
);

const MiniPage = ({ x = 0, c = "#8f8f8d" }) => <path d={`M${x + 0.5} .5h5l3 3v8h-8zM${x + 5.5} .5v3h3`} stroke={c} fill="none" />;

const Writer = () => (
  <Screen>
    <Dock />
    <WriterWindow>
      <TitleBar>
        <span />
        <h1>Untitled 1 - LibreOffice Writer</h1>
        <WinControls><Controls /></WinControls>
      </TitleBar>
      <MenuRow>
        <Menu>{MENU.map(([m, w]) => <MenuButton key={m} $w={w}>{m}</MenuButton>)}</Menu>
        <CloseDoc aria-label="Close document"><Cross /></CloseDoc>
      </MenuRow>
      <Toolbar $h={38}><Grip $gap={4} /><Tools items={STANDARD} /></Toolbar>
      <Toolbar $h={40}>
        <Grip $gap={6} />
        <Select w={140} label="Paragraph style" value="Default Style" />
        <Tool aria-label="Update style">{I.upd}</Tool>
        <Tool aria-label="New style">{I.newStyle}</Tool>
        <Sep />
        <Select w={140} before={2} after={10} label="Font name" value="Ubuntu" />
        <Select w={69} label="Font size" value="12" />
        <Tools items={FORMAT_TEXT} />
      </Toolbar>
      <Workspace>
        <Canvas>
          <RulerRow><TabMark /><Ruler /></RulerRow>
          <Paper>
            <Corners />
            <Para lang="ka">
              <span>დეშიფრატორს</span> <span>უწოდებენ</span> <span>ისეთ</span> <span>კომბინაციურ</span> <span>მოწყობილობას,რომელსაც</span> <span>აქვს</span>
            </Para>
          </Paper>
        </Canvas>
        <ScrollStrip />
        <SidePane>
          <Splitter><Handle aria-label="Hide sidebar" /></Splitter>
          <SideBar>
            <SideButton aria-label="Sidebar settings"><Svg><path d="M7 8h8M7 11h8M7 14h8" stroke="#3a4a78" /><path d="M12 15h7l-3.500 3.500z" fill="#111a44" /></Svg></SideButton>
            <hr />
            <SideButton $on aria-label="Properties"><Svg><path d="M3 1l4 0 3 4 0 3 7 8 4 0 2 3-1 4-2-3-3 1 0 3-3-2-1-5-7-8-4-1-2-4 1-3 2 4 3-1z" fill="#f5f5f5" stroke="#8f8f8d" /></Svg></SideButton>
            <SideButton aria-label="Page"><Svg><path d="M3.5 1.500h12l5 5v16h-17z" fill="#f5f5f4" stroke="#8a8a88" /><path d="M15 2v5h5" stroke="#aaa" /></Svg></SideButton>
            <SideButton aria-label="Styles"><Svg><text x="14" y="21" fontFamily={`"Liberation Serif", serif`} fontSize="28" fontWeight="700" textAnchor="middle" fill="#3c403e">T</text><path d="M1 7v16h20z" fill="#8ccb3c" stroke="#4e9a06" /><path d="M5 15v4h5z" fill="#f2f1f0" stroke="#4e9a06" /></Svg></SideButton>
            <SideButton aria-label="Gallery"><Svg><path d="M9 5l3-3 3 3" stroke="#777" strokeWidth="1.5" /><rect x="1.5" y="5.5" width="21" height="15" fill="#8b9aa6" stroke="#8a5200" strokeWidth="2.5" /><path d="M3 13h18v6H3z" fill="#f0a93a" /><path d="M14 19v-6l-4-4m4 4l4-4" stroke="#443" strokeWidth="1.6" /></Svg></SideButton>
            <SideButton aria-label="Navigator"><Svg><circle cx="12" cy="12" r="10.5" fill="#fbfbfb" stroke="#9a9a98" strokeWidth="2.4" /><path d="M7 7l6.500 3-3 3z" fill="#e03030" /><path d="M17 18l-6.500-5 3-3z" fill="#5577a5" /></Svg></SideButton>
          </SideBar>
        </SidePane>
      </Workspace>
      <StatusBar>
        <Cell $w={276}>Page 1 of 1</Cell>
        <Cell $w={338}>6 words, 65 characters</Cell>
        <Cell $w={293}>Default Style</Cell>
        <Cell $w={292} $center>English (USA)</Cell>
        <Cell $w={69} />
        <Cell $w={29} $center><svg width="12" height="12" viewBox="0 0 12 12"><path d="M0 2h8v8H0z" fill="#8a8a88" /><path d="M8 .5h4M10 .5v11m-2 0h4" stroke="#8a8a88" /></svg></Cell>
        <Cell $w={29} $center><svg width="12" height="12" viewBox="0 0 12 12" fill="none"><path d="M7 .5H.5v11H8V9" stroke="#8a8a88" /><path d="M8.5 3v6M6 4.500l5 3m0-3l-5 3" stroke="#cc1a1a" strokeWidth="1.3" /></svg></Cell>
        <Cell $w={29} />
        <Cell $grow />
        <Cell $w={76} $center $gap={5}>
          <svg width="9" height="12" viewBox="0 0 9 12"><MiniPage c="#333" /></svg>
          <svg width="19" height="12" viewBox="0 0 19 12"><MiniPage /><MiniPage x={10} /></svg>
          <svg width="17" height="12" viewBox="0 0 17 12"><path d="M3.5 .5h5v11h-8v-8zM8.500 .5h5l3 3v8h-8" stroke="#8f8f8d" fill="none" /></svg>
        </Cell>
        <Cell $w={143} $center $gap={6}>
          <svg width="8" height="8" viewBox="0 0 8 8"><path d="M0 4h8" stroke="#8a8a88" strokeWidth="2" /></svg>
          <ZoomRange type="range" aria-label="Zoom" min="0" max="100" defaultValue="50" />
          <svg width="8" height="8" viewBox="0 0 8 8"><path d="M0 4h8M4 0v8" stroke="#8a8a88" strokeWidth="2" /></svg>
        </Cell>
        <Cell $w={39} $last>100%</Cell>
      </StatusBar>
    </WriterWindow>
  </Screen>
);

/* ---------- Laptop screen ---------- */

const SecondMonitor = styled.section`
  display: grid;
  grid-template-columns: minmax(0, 1fr);
  grid-template-rows: 312fr 768fr;
  min-width: 0;
  min-height: 0;
  background: #000;
`;
const Laptop = styled.div`
  grid-row: 2;
  min-height: 0;
  display: flex;
  flex-direction: column;
`;
const TopBar = styled.header`
  height: 27px;
  display: grid;
  grid-template-columns: 1fr auto 1fr;
  align-items: center;
  padding: 0 15px 0 12px;
  background: linear-gradient(#57554d, #3d3c37);
  color: #dfdbd2;
  font-size: 15px;
  font-weight: 600;
  line-height: 20px;
`;
const TopGroup = styled.div`
  display: flex;
  align-items: center;
  gap: ${(p) => p.$gap}px;
  justify-self: ${(p) => (p.$end ? "end" : "start")};
`;
const TopItem = styled.button`
  display: flex;
  align-items: center;
  gap: ${(p) => p.$gap || 6}px;
`;
const Caret = styled.i`
  border: 5px solid transparent;
  border-top: 6px solid #cfccc2;
  border-bottom: 0;
`;
const Clock = styled.time`
  padding-left: 67px;
`;

const Browser = styled.div`
  flex: 1;
  min-width: 0;
  display: flex;
  flex-direction: column;
  background: #fff;
`;
const TabStrip = styled.div`
  height: 34px;
  display: flex;
  align-items: center;
  padding: 0 6px 0 9px;
  background: linear-gradient(#5c5a50, #3e3d38);
  border-top: 1px solid #66645a;
`;
const Tabs = styled.div`
  flex: 0 1 1144px;
  align-self: stretch;
  display: flex;
`;
const Tab = styled.div`
  flex: 1 1 0;
  min-width: 0;
  display: flex;
  align-items: center;
  padding: 0 9px 0 10px;
  color: ${(p) => (p.$active ? "#4c4c4c" : "#dfdbd2")};
  background: ${(p) => (p.$active ? "#f2f1f0" : "none")};
  border-radius: 8px 8px 0 0;
  &::after {
    content: "";
    width: 1px;
    height: 20px;
    margin: 0 -10px 0 9px;
    background: ${(p) => (p.$line ? "#85837a" : "transparent")};
  }
`;
const TabName = styled.span`
  flex: 1;
  min-width: 0;
  margin: 0 5px 0 9px;
  overflow: hidden;
  white-space: nowrap;
  line-height: 20px;
  mask-image: linear-gradient(90deg, #000 55%, transparent);
`;
const PlainButton = styled.button`
  flex: none;
  width: ${(p) => p.$w}px;
  height: 24px;
  display: grid;
  place-items: center;
  color: ${(p) => p.$c || "inherit"};
`;
const TabControls = styled.div`
  margin-left: auto;
  display: flex;
  gap: 4px;
`;
const NavBar = styled.div`
  height: 38px;
  display: flex;
  align-items: center;
  padding: 0 6px 1px 6px;
  background: #f2f1f0;
  border-bottom: 1px solid #cfcecc;
  color: #4a4a4a;
`;
const Omnibox = styled.div`
  flex: 1;
  min-width: 0;
  height: 28px;
  margin: 0 11px 0 7px;
  display: flex;
  align-items: center;
  padding: 0 1px 0 12px;
  border-radius: 14px;
  background: #f1f3f4;
  color: #4a4d50;
`;
const Url = styled.span`
  flex: 1;
  min-width: 0;
  margin-left: 11px;
  overflow: hidden;
  white-space: nowrap;
  font-family: Roboto, ${UI};
  line-height: 20px;
  color: #7b8084;
  b { font-weight: 400; color: #202124; }
`;
const Avatar = styled.button`
  width: 20px;
  height: 20px;
  margin: 0 6px 0 12px;
  border-radius: 50%;
  background: #0097a7;
  color: #fff;
  font-size: 12px;
  line-height: 18px;
`;
const VLine = styled.i`
  width: 1px;
  height: 16px;
  margin-left: 8px;
  background: #c8c7c5;
`;

const Viewport = styled.div`
  flex: 1;
  min-height: 0;
  display: flex;
`;
const WebPage = styled.div`
  flex: 1;
  min-width: 0;
  font-family: ${ARIAL};
  font-size: 12px;
  color: #1d2129;
`;
const FbHeader = styled.header`
  height: 83px;
  background: linear-gradient(#525ca4, #404a9a 50%, #3f4898);
  border-bottom: 1px solid #1c1e80;
`;
const Wide = styled.div`
  max-width: 980px;
  margin: 0 auto;
`;
const Logo = styled.a`
  display: inline-block;
  padding-top: 21px;
  font-family: Lato, ${ARIAL};
  font-weight: 900;
  font-size: 41px;
  line-height: 52px;
  color: #fff;
  text-decoration: none;
`;
const FbBody = styled.main`
  height: 415px;
  padding-top: 100px;
  background: #e9ebee;
`;
const Card = styled.form`
  width: 557px;
  margin: 0 auto;
  border: 1px solid #c9cacc;
  border-radius: 4px;
  background: #fff;
  overflow: hidden;
`;
const CardBody = styled.div`
  padding: 21px 20px 0;
  height: 172px;
  h2 { font-size: 16px; line-height: 20px; color: #1c1e4c; padding-bottom: 8px; border-bottom: 1px solid #ccc; }
  > p { margin-top: 14px; line-height: 18px; }
`;
const CodeRow = styled.div`
  display: flex;
  justify-content: space-between;
  margin-top: 17px;
`;
const CodeInput = styled.input`
  width: 267px;
  height: 42px;
  margin-left: -1px;
  padding: 0 4px;
  border: 1px solid #dc8d70;
  border-radius: 2px;
  box-shadow: inset 0 0 0 1px #f8b89c;
  background: #fff;
  color: #1d2129;
  font-family: ${ARIAL};
  font-size: 26px;
`;
const Sent = styled.div`
  line-height: 20px;
`;
const CardFoot = styled.div`
  height: 42px;
  display: flex;
  align-items: center;
  gap: 4px;
  padding: 0 10px;
  border-top: 1px solid #ccc;
  background: #f2f2f2;
  a { margin-right: auto; color: #4650a8; text-decoration: none; }
`;
const FbButton = styled.button`
  height: 24px;
  padding: 0 8px;
  border: 1px solid ${(p) => (p.$primary ? "#4652b4" : "#ced0d8")};
  border-radius: 2px;
  background: ${(p) => (p.$primary ? "#4652b4" : "#f5f6f7")};
  color: ${(p) => (p.$primary ? "#fff" : "#4b4f56")};
  font-family: ${ARIAL};
  font-weight: 700;
`;
const Scroll = styled.div`
  width: 15px;
  display: flex;
  flex-direction: column;
  align-items: center;
  background: #f1f1f1;
  &::before, &::after { content: ""; border: 4px solid transparent; margin: 5px 0; }
  &::before { border-bottom: 5px solid #a0a0a0; border-top: 0; }
  &::after { border-top: 5px solid #505050; border-bottom: 0; margin-top: auto; }
`;
const Thumb = styled.i`
  width: 11px;
  height: 73%;
  background: #c1c1c1;
`;

const Fav = ({ children }) => <svg width="16" height="16" viewBox="0 0 16 16" fill="none">{children}</svg>;
const favs = {
  so: <Fav><path d="M2 10v5h10v-5" stroke="#aaa39a" strokeWidth="1.5" /><path d="M4 12.500h6M4.200 10l6 .6M5 7.300l5.500 2M6.500 4.500l4.600 4M9.200 2l3 5.200" stroke="#f0741e" strokeWidth="1.5" /></Fav>,
  gm: <Fav><path d="M1 3h14v11H1z" fill="#f3f3f3" /><path d="M2 14V4l6 5 6-5v10" stroke="#d5281f" strokeWidth="2.4" /></Fav>,
  bx: <Fav><rect width="16" height="16" fill="#fff" /><path d="M3 4l9-1q2 5-3 8l-5 3V8" stroke="#f58a1f" strokeWidth="2.4" /></Fav>,
  fb: <Fav><rect width="16" height="16" fill="#4257b2" /><path d="M11 16v-6h2l.4-2.500H11V6q0-1.200 1.300-1.200h1.400V2.600Q8.300 1.600 8.300 5.500v2H6.300V10h2v6z" fill="#fff" /></Fav>,
  gl: <Fav><path d="M8 14.500L1 9l2-7 2 5h6l2-5 2 7z" fill="#fc6d26" /><path d="M8 14.500L5 7h6z" fill="#e24329" /><path d="M1 9l2-2h2l3 7.500zM15 9l-2-2h-2l-3 7.500z" fill="#fca326" /></Fav>,
  de: <Fav><path d="M1 13L6 4h4l5 9" stroke="#e6702c" strokeWidth="2.2" /><path d="M4 13l3-6h2l3 6" stroke="#f2c84a" strokeWidth="1.6" /><circle cx="8" cy="6" r="3.6" fill="#2a76d0" /></Fav>,
  ask: <Fav><path d="M8 0a8 8 0 0 1 8 8v7l-3-.7A8 8 0 1 1 8 0z" fill="#f0350a" /><text x="8" y="10.5" fontFamily={UI} fontSize="8" fontWeight="700" textAnchor="middle" fill="#fff">ask</text></Fav>,
};
const TABS = [["so", "php - m"], ["gm", "Входящ"], ["bx", "(2) Task"], ["fb", "Facebo"], ["gl", "Implem"], ["gm", "Входящ"], ["gm", "Inbox ("], ["de", "Дешиф"], ["de", "Дешиф"], ["ask", "How to"]];

const Facebook = () => (
  <WebPage lang="ru">
    <FbHeader><Wide><Logo href="#">facebook</Logo></Wide></FbHeader>
    <FbBody>
      <Card onSubmit={(e) => e.preventDefault()}>
        <CardBody>
          <h2>Введите код безопасности</h2>
          <p>Проверьте электронную почту. Мы отправили вам письмо с 6-значным кодом.</p>
          <CodeRow>
            <CodeInput aria-label="Код безопасности" defaultValue="56894121345678979" />
            <Sent>
              <b>Мы отправили код на:</b>
              <div>b*****a@m***.ru</div>
              <div>baxbaia@bk.ru</div>
            </Sent>
          </CodeRow>
        </CardBody>
        <CardFoot>
          <a href="#">Не получили код?</a>
          <FbButton $primary type="submit">Продолжить</FbButton>
          <FbButton type="button">Отмена</FbButton>
        </CardFoot>
      </Card>
    </FbBody>
  </WebPage>
);

const LaptopScreen = () => (
  <SecondMonitor>
    <Laptop>
      <TopBar>
        <TopGroup $gap={18}>
          <TopItem>Activities</TopItem>
          <TopItem><Chrome size={18} />Google Chrome<Caret /></TopItem>
        </TopGroup>
        <Clock lang="ka">ხუთ 13:31</Clock>
        <TopGroup $gap={32} $end>
          <TopItem>en<Caret /></TopItem>
          <TopItem $gap={12} aria-label="System menu">
            <Fav><path d="M5 1h5v4H5zM0 11h5v5H0zM10 11h5v5h-5z" fill="#d5d2c8" /><path d="M7.5 5v3M2.500 11V8h10v3" stroke="#d5d2c8" /></Fav>
            <Fav><path d="M0 5h3l4-4v14l-4-4H0z" fill="#d5d2c8" /><path d="M9 5q2 3 0 6M11.500 3q3 5 0 10M14 2q3 6 0 12" stroke="#d5d2c8" strokeWidth="1.3" /></Fav>
            <Fav><path d="M3 3h3V1h4v2h3v12H3z" stroke="#b5b2a8" strokeWidth="1.5" /><path d="M10 5l-5 5h3l-1 3 4-5H8z" fill="#d5d2c8" /></Fav>
            <Caret />
          </TopItem>
        </TopGroup>
      </TopBar>
      <Screen>
        <Dock fade />
        <Browser>
          <TabStrip>
            <Tabs>
              {TABS.map(([f, t], i) => (
                <Tab key={i} $active={i === 3} $line={i !== 2 && i !== 3}>
                  {favs[f]}<TabName>{t}</TabName>
                  <PlainButton $w={12} aria-label="Close tab"><Cross s={9} /></PlainButton>
                </Tab>
              ))}
            </Tabs>
            <PlainButton $w={42} $c="#dfdbd2" aria-label="New tab"><svg width="12" height="12" viewBox="0 0 12 12"><path d="M0 6h12M6 0v12" stroke="currentColor" strokeWidth="2" /></svg></PlainButton>
            <TabControls><Controls lit /></TabControls>
          </TabStrip>
          <NavBar>
            <PlainButton $w={32} aria-label="Back"><Fav><path d="M15 8H2m6-6L2 8l6 6" stroke="currentColor" strokeWidth="2" /></Fav></PlainButton>
            <PlainButton $w={32} $c="#a9a8a6" aria-label="Forward"><Fav><path d="M1 8h13M8 2l6 6-6 6" stroke="currentColor" strokeWidth="2" /></Fav></PlainButton>
            <PlainButton $w={32} aria-label="Reload"><Fav><path d="M13.5 10A6 6 0 1 1 12.500 4" stroke="currentColor" strokeWidth="2" /><path d="M14.5 1v6h-6z" fill="currentColor" /></Fav></PlainButton>
            <Omnibox>
              <svg width="10" height="14" viewBox="0 0 10 14"><path d="M1 5h8v7H1z" fill="#4a4d50" stroke="#4a4d50" /><path d="M2.5 5V3.500a2.500 2.500 0 0 1 5 0V5" stroke="#4a4d50" strokeWidth="1.4" fill="none" /></svg>
              <Url><b>facebook.com</b>/recover/code/?ars=contact_point_login&amp;em[0]=b*****a%40m***.ru&amp;em[1]=baxbaia%40bk.ru&amp;spc=0&amp;fl=three_login_attempts_failure…</Url>
              <PlainButton $w={32} aria-label="Saved password"><Fav><circle cx="5" cy="8" r="3" stroke="currentColor" strokeWidth="2.4" /><path d="M8 8h7v3m-2.500-3v3" stroke="currentColor" strokeWidth="2.4" /></Fav></PlainButton>
              <PlainButton $w={32} aria-label="Bookmark"><Fav><path d="M8 1.800l1.900 4.300 4.600.4-3.500 3.100 1 4.600L8 11.800l-4 2.400 1-4.600L1.500 6.500l4.600-.4z" stroke="currentColor" strokeWidth="1.4" /></Fav></PlainButton>
            </Omnibox>
            <PlainButton $w={24} aria-label="Vue extension"><Fav><path d="M0 1h4l4 7 4-7h4L8 15z" fill="#b4b4b4" /><path d="M4 1h3l1 2 1-2h3L8 8z" fill="#8a8a8a" /></Fav></PlainButton>
            <VLine />
            <Avatar aria-label="Profile">g</Avatar>
            <PlainButton $w={32} aria-label="Menu"><Fav><path d="M8 3v0M8 8v0M8 13v0" stroke="currentColor" strokeWidth="3" strokeLinecap="round" /></Fav></PlainButton>
          </NavBar>
          <Viewport>
            <Facebook />
            <Scroll><Thumb /></Scroll>
          </Viewport>
        </Browser>
      </Screen>
    </Laptop>
  </SecondMonitor>
);

export default function App() {
  return (
    <>
      <Global />
      <Desktop>
        <Writer />
        <LaptopScreen />
      </Desktop>
    </>
  );
}
